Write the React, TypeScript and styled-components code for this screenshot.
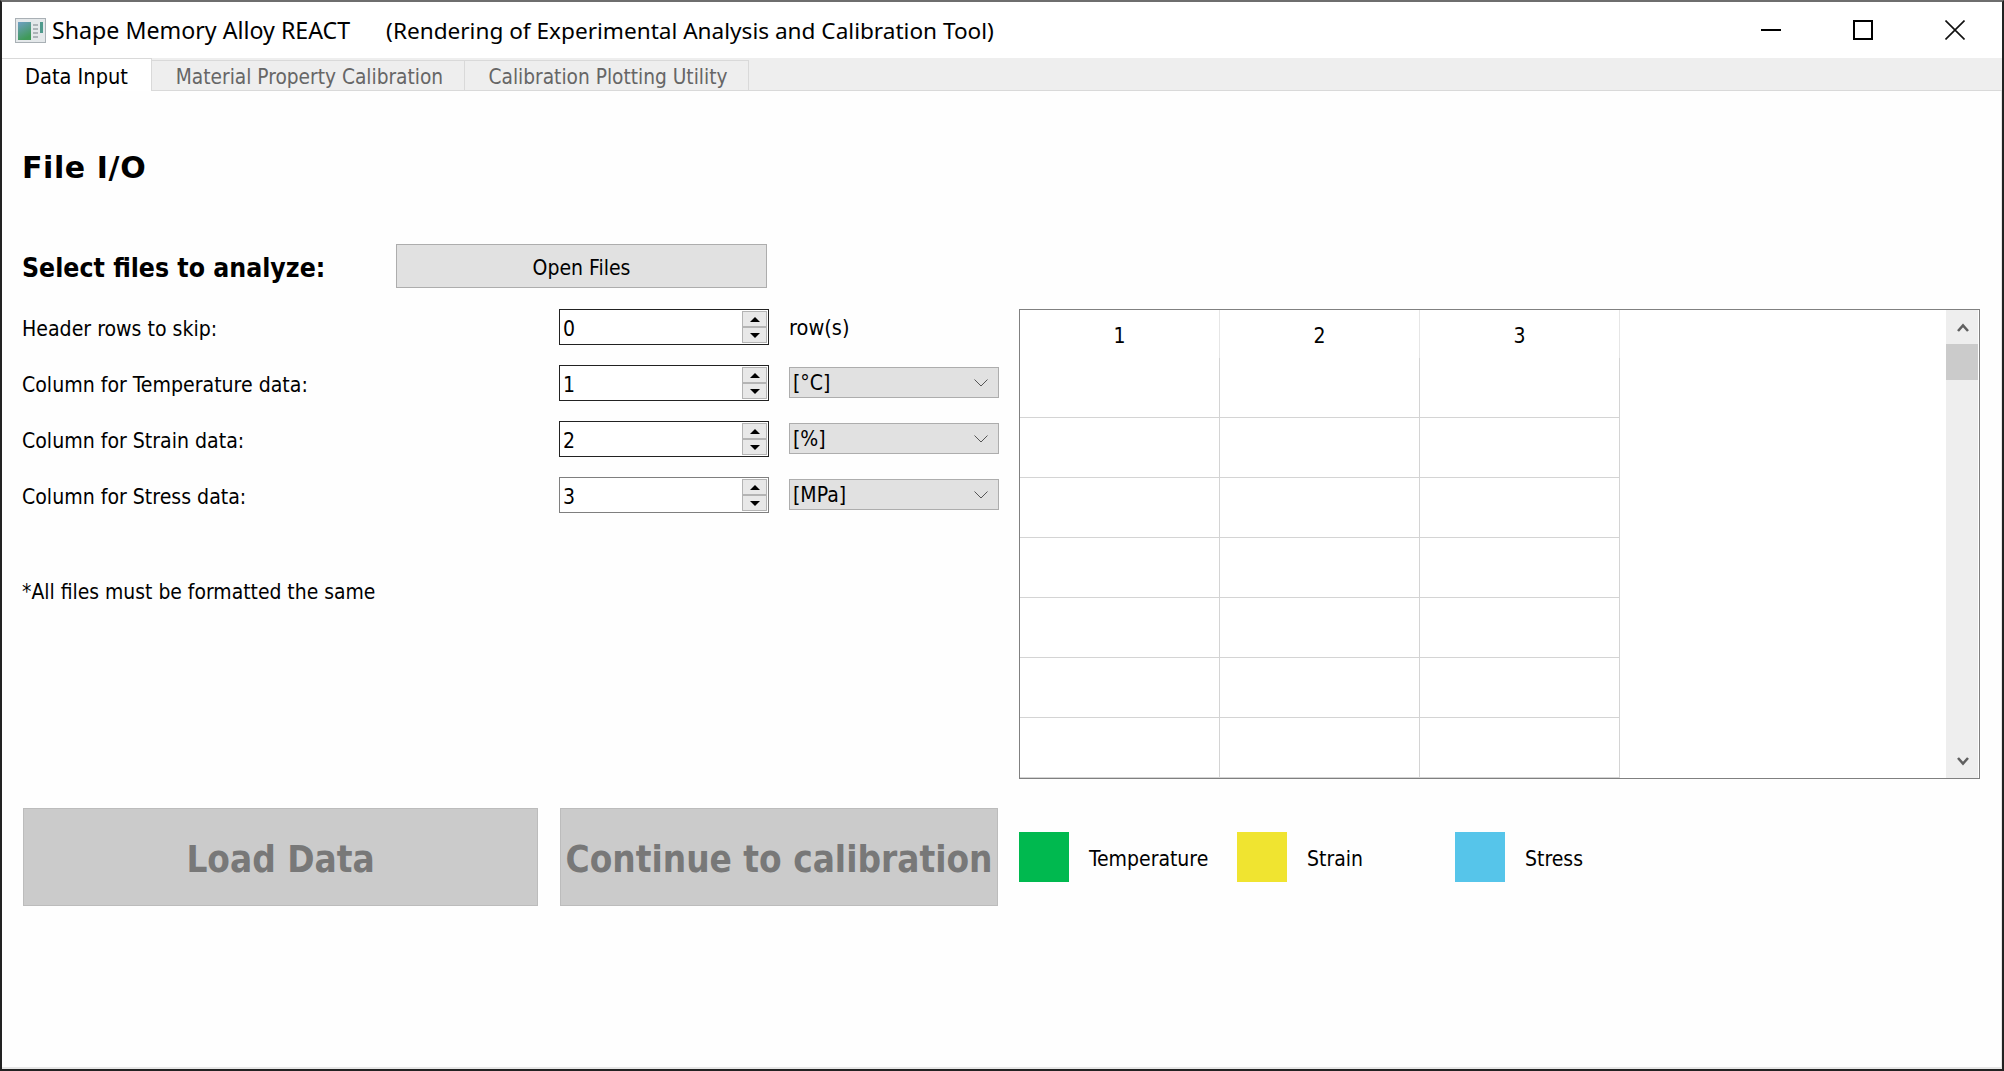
import React, {FC} from 'react';
import styled, {createGlobalStyle} from 'styled-components';

const GlobalStyle = createGlobalStyle`
  html, body {
    margin: 0;
    padding: 0;
    background: #202225;
  }
  * {
    box-sizing: border-box;
  }
`

const bodyFont = `"DejaVu Sans Condensed", "DejaVu Sans", sans-serif`

const Frame = styled.div`
  width: 2004px;
  height: 1071px;
  display: flex;
  flex-direction: column;
  background: #fff;
  border-top: 2px solid #6e6e6e;
  border-left: 2px solid #222;
  border-right: 2px solid #222;
  border-bottom: 2px solid #222;
  font-family: ${bodyFont};
  font-stretch: condensed;
  color: #000;
  overflow: hidden;
`

const TitleBar = styled.div`
  height: 56px;
  flex: none;
  display: flex;
  align-items: center;
  padding-left: 13px;
  font-family: "Noto Sans", sans-serif;
`

const TitleText = styled.span<{ $left: number; $size: number }>`
  margin-left: ${p => p.$left}px;
  font-size: ${p => p.$size}px;
  white-space: nowrap;
`

const WindowControls = styled.div`
  margin-left: auto;
  display: flex;
  align-items: center;
  padding-right: 37px;
  gap: 72px;
`

const TabBar = styled.div`
  height: 32px;
  flex: none;
  display: flex;
  align-items: flex-start;
  background: #eee;
  position: relative;
  z-index: 1;
`

const Tab = styled.div<{ $active?: boolean; $width: number }>`
  width: ${p => p.$width}px;
  height: ${p => (p.$active ? 33 : 30)}px;
  margin-top: ${p => (p.$active ? 0 : 2)}px;
  padding-top: 3px;
  padding-left: ${p => (p.$active ? 0 : 3)}px;
  display: flex;
  align-items: center;
  justify-content: center;
  font-size: ${p => (p.$active ? 21.6 : 20.7)}px;
  color: ${p => (p.$active ? '#000' : '#666')};
  background: ${p => (p.$active ? '#fff' : '#eee')};
  border-top: 1px solid #d9d9d9;
  border-right: 1px solid #d9d9d9;
  white-space: nowrap;
`

const Pane = styled.div`
  flex: 1;
  display: flex;
  flex-direction: column;
  padding: 0 19px 0 21px;
  border-top: 1px solid #d9d9d9;
  border-right: 1px solid #e6e6e6;
  border-bottom: 2px solid #e6e6e6;
  background: #fefefe;
`

const Heading = styled.h1`
  margin: 60px 0 0 -1px;
  height: 34px;
  line-height: 34px;
  font-family: "DejaVu Sans", sans-serif;
  font-stretch: normal;
  font-size: 30px;
  letter-spacing: 0.6px;
  font-weight: bold;
`

const SelectRow = styled.div`
  margin-top: 59px;
  display: flex;
  align-items: center;
`

const SelectTitle = styled.h2`
  margin: 0 0 0 -1px;
  width: 374px;
  padding-top: 3px;
  font-size: 26.4px;
  font-weight: bold;
`

const GreyButton = styled.button`
  width: 371px;
  height: 44px;
  background: #e1e1e1;
  border: 1px solid #adadad;
  font-family: inherit;
  font-stretch: inherit;
  font-size: 21px;
  color: #000;
  padding: 4px 0 0;
`

const BodyRow = styled.div`
  margin-top: 21px;
  height: 470px;
  display: flex;
`

const LeftColumn = styled.div`
  width: 996px;
  flex: none;
`

const FieldGrid = styled.div`
  display: grid;
  grid-template-columns: 536px 210px 230px;
  row-gap: 20px;
  align-items: center;
`

const FieldLabel = styled.div`
  margin-left: -1px;
  padding-top: 3px;
  font-size: 21.1px;
`

const SpinBox = styled.div<{ $focused?: boolean }>`
  width: 210px;
  height: 36px;
  display: flex;
  align-items: center;
  justify-content: space-between;
  padding: 1px 1px 1px 3px;
  font-size: 21px;
  background: #fff;
  border: 1px solid ${p => (p.$focused ? '#222' : '#7f7f7f')};
`

const SpinValue = styled.span`
  padding-top: 3px;
`

const SpinButtons = styled.div`
  width: 25px;
  height: 32px;
  display: flex;
  flex-direction: column;
`

const SpinButton = styled.div`
  flex: 1;
  display: flex;
  align-items: center;
  justify-content: center;
  background: #e8e8e8;
  border: 1px solid #b4b4b4;
`

const UnitCell = styled.div`
  margin-left: 20px;
  padding-top: 1px;
  font-size: 21.6px;
`

const Combo = styled.div`
  margin: 0 0 1px 20px;
  width: 210px;
  height: 31px;
  display: flex;
  align-items: center;
  justify-content: space-between;
  padding: 1px 10px 0 3px;
  font-size: 21px;
  background: #e1e1e1;
  border: 1px solid #adadad;
`

const Note = styled.p`
  margin: 66px 0 0 -1px;
  font-size: 20.9px;
  line-height: 26px;
`

const TableFrame = styled.div`
  width: 961px;
  height: 470px;
  display: flex;
  background: #fff;
  border: 1px solid #808080;
  overflow: hidden;
`

const TableArea = styled.div`
  flex: 1;
  overflow: hidden;
`

const DataTable = styled.table`
  width: 600px;
  table-layout: fixed;
  border-collapse: separate;
  border-spacing: 0;
`

const HeaderCell = styled.th`
  height: 48px;
  padding: 3px 0 0;
  font-size: 21px;
  font-weight: normal;
  text-align: center;
  border-right: 1px solid #e6e6e6;
`

const DataCell = styled.td`
  height: 60px;
  padding: 0;
  border-right: 1px solid #d4d4d4;
  border-bottom: 1px solid #d4d4d4;
`

const Scrollbar = styled.div`
  width: 32px;
  flex: none;
  margin-right: 1px;
  display: flex;
  flex-direction: column;
  background: #eee;
`

const ScrollArrow = styled.div`
  height: 34px;
  display: flex;
  align-items: center;
  justify-content: center;
  padding-left: 1px;
`

const ScrollThumb = styled.div`
  height: 36px;
  background: #cbcbcb;
`

const ScrollTrack = styled.div`
  flex: 1;
`

const BottomRow = styled.div`
  margin-top: 29px;
  display: flex;
  align-items: center;
`

const BigButton = styled.button<{ $width: number; $gap: number }>`
  width: ${p => p.$width}px;
  height: 98px;
  margin-right: ${p => p.$gap}px;
  flex: none;
  padding: 4px 0 0;
  background: #cbcbcb;
  border: 1px solid #bcbcbc;
  font-family: inherit;
  font-stretch: inherit;
  font-size: 36.6px;
  font-weight: bold;
  color: #787878;
  white-space: nowrap;
`

const Legend = styled.div`
  display: flex;
`

const LegendItem = styled.div`
  width: 218px;
  display: flex;
  align-items: center;
  gap: 20px;
  font-size: 21px;
`

const LegendLabel = styled.span`
  padding-top: 3px;
`

const Swatch = styled.div<{ $color: string }>`
  width: 50px;
  height: 50px;
  background: ${p => p.$color};
`

const AppIcon: FC = () => (
    <svg width="31" height="25" viewBox="0 0 31 25">
        <defs>
            <linearGradient id="appIconFill" x1="0" y1="0" x2="0.4" y2="1">
                <stop offset="0" stopColor="#6f9fc4"/>
                <stop offset="1" stopColor="#3f9a58"/>
            </linearGradient>
        </defs>
        <rect x="0.5" y="0.5" width="30" height="24" fill="#e4e8ea" stroke="#a9b0b5"/>
        <rect x="3" y="4" width="13" height="18" fill="url(#appIconFill)"/>
        <path d="M18 7h5M18 11h5M18 15h5M18 19h5" stroke="#9aa3a8" strokeWidth="1.5"/>
        <rect x="25" y="4" width="3" height="11" fill="#4f9a8c"/>
    </svg>
)

const MinimizeIcon: FC = () => (
    <svg width="20" height="20" viewBox="0 0 20 20">
        <path d="M0 10h20" stroke="#000" strokeWidth="2"/>
    </svg>
)

const MaximizeIcon: FC = () => (
    <svg width="20" height="20" viewBox="0 0 20 20">
        <rect x="1" y="1" width="18" height="18" fill="none" stroke="#000" strokeWidth="2"/>
    </svg>
)

const CloseIcon: FC = () => (
    <svg width="20" height="20" viewBox="0 0 20 20">
        <path d="M0.5 0.5L19.5 19.5M19.5 0.5L0.5 19.5" stroke="#111" strokeWidth="1.6"/>
    </svg>
)

const Triangle: FC<{ up?: boolean }> = ({up}) => (
    <svg width="10" height="5" viewBox="0 0 10 5">
        <path d={up ? 'M0 5L5 0L10 5Z' : 'M0 0L5 5L10 0Z'} fill="#000"/>
    </svg>
)

const ComboChevron: FC = () => (
    <svg width="14" height="8" viewBox="0 0 14 8">
        <path d="M0.5 0.5L7 7L13.5 0.5" fill="none" stroke="#555" strokeWidth="1"/>
    </svg>
)

const ScrollChevron: FC<{ up?: boolean }> = ({up}) => (
    <svg width="12" height="9" viewBox="0 0 12 9">
        <path d={up ? 'M1 8L6 2.5L11 8' : 'M1 1L6 6.5L11 1'} fill="none" stroke="#606060" strokeWidth="2.6"/>
    </svg>
)

const Spin: FC<{ value: number; focused?: boolean }> = ({value, focused}) => (
    <SpinBox $focused={focused}>
        <SpinValue>{value}</SpinValue>
        <SpinButtons>
            <SpinButton><Triangle up/></SpinButton>
            <SpinButton><Triangle/></SpinButton>
        </SpinButtons>
    </SpinBox>
)

const fields = [
    {label: 'Header rows to skip:', value: 0, unit: null, focused: true},
    {label: 'Column for Temperature data:', value: 1, unit: '[°C]', focused: true},
    {label: 'Column for Strain data:', value: 2, unit: '[%]', focused: true},
    {label: 'Column for Stress data:', value: 3, unit: '[MPa]', focused: false},
]

const legend = [
    {label: 'Temperature', color: '#00b94f'},
    {label: 'Strain', color: '#f0e430'},
    {label: 'Stress', color: '#56c5ea'},
]

const rows = [1, 2, 3, 4, 5, 6, 7]
const columns = [1, 2, 3]

const App: FC = () => {
    return (
        <Frame>
            <GlobalStyle/>
            <TitleBar>
                <AppIcon/>
                <TitleText $left={6} $size={23.2}>Shape Memory Alloy REACT</TitleText>
                <TitleText $left={36} $size={22.6}>(Rendering of Experimental Analysis and Calibration Tool)</TitleText>
                <WindowControls>
                    <MinimizeIcon/>
                    <MaximizeIcon/>
                    <CloseIcon/>
                </WindowControls>
            </TitleBar>
            <TabBar>
                <Tab $active $width={150}>Data Input</Tab>
                <Tab $width={313}>Material Property Calibration</Tab>
                <Tab $width={284}>Calibration Plotting Utility</Tab>
            </TabBar>
            <Pane>
                <Heading>File I/O</Heading>
                <SelectRow>
                    <SelectTitle>Select files to analyze:</SelectTitle>
                    <GreyButton>Open Files</GreyButton>
                </SelectRow>
                <BodyRow>
                    <LeftColumn>
                        <FieldGrid>
                            {fields.map(field =>
                                <React.Fragment key={field.label}>
                                    <FieldLabel>{field.label}</FieldLabel>
                                    <Spin value={field.value} focused={field.focused}/>
                                    {field.unit
                                        ? <Combo>{field.unit}<ComboChevron/></Combo>
                                        : <UnitCell>row(s)</UnitCell>}
                                </React.Fragment>
                            )}
                        </FieldGrid>
                        <Note>*All files must be formatted the same</Note>
                    </LeftColumn>
                    <TableFrame>
                        <TableArea>
                            <DataTable>
                                <thead>
                                    <tr>
                                        {columns.map(col => <HeaderCell key={col}>{col}</HeaderCell>)}
                                    </tr>
                                </thead>
                                <tbody>
                                    {rows.map(row =>
                                        <tr key={row}>
                                            {columns.map(col => <DataCell key={col}/>)}
                                        </tr>
                                    )}
                                </tbody>
                            </DataTable>
                        </TableArea>
                        <Scrollbar>
                            <ScrollArrow><ScrollChevron up/></ScrollArrow>
                            <ScrollThumb/>
                            <ScrollTrack/>
                            <ScrollArrow><ScrollChevron/></ScrollArrow>
                        </Scrollbar>
                    </TableFrame>
                </BodyRow>
                <BottomRow>
                    <BigButton disabled $width={515} $gap={22}>Load Data</BigButton>
                    <BigButton disabled $width={438} $gap={21}>Continue to calibration</BigButton>
                    <Legend>
                        {legend.map(item =>
                            <LegendItem key={item.label}>
                                <Swatch $color={item.color}/>
                                <LegendLabel>{item.label}</LegendLabel>
                            </LegendItem>
                        )}
                    </Legend>
                </BottomRow>
            </Pane>
        </Frame>
    );
};

export default App;
